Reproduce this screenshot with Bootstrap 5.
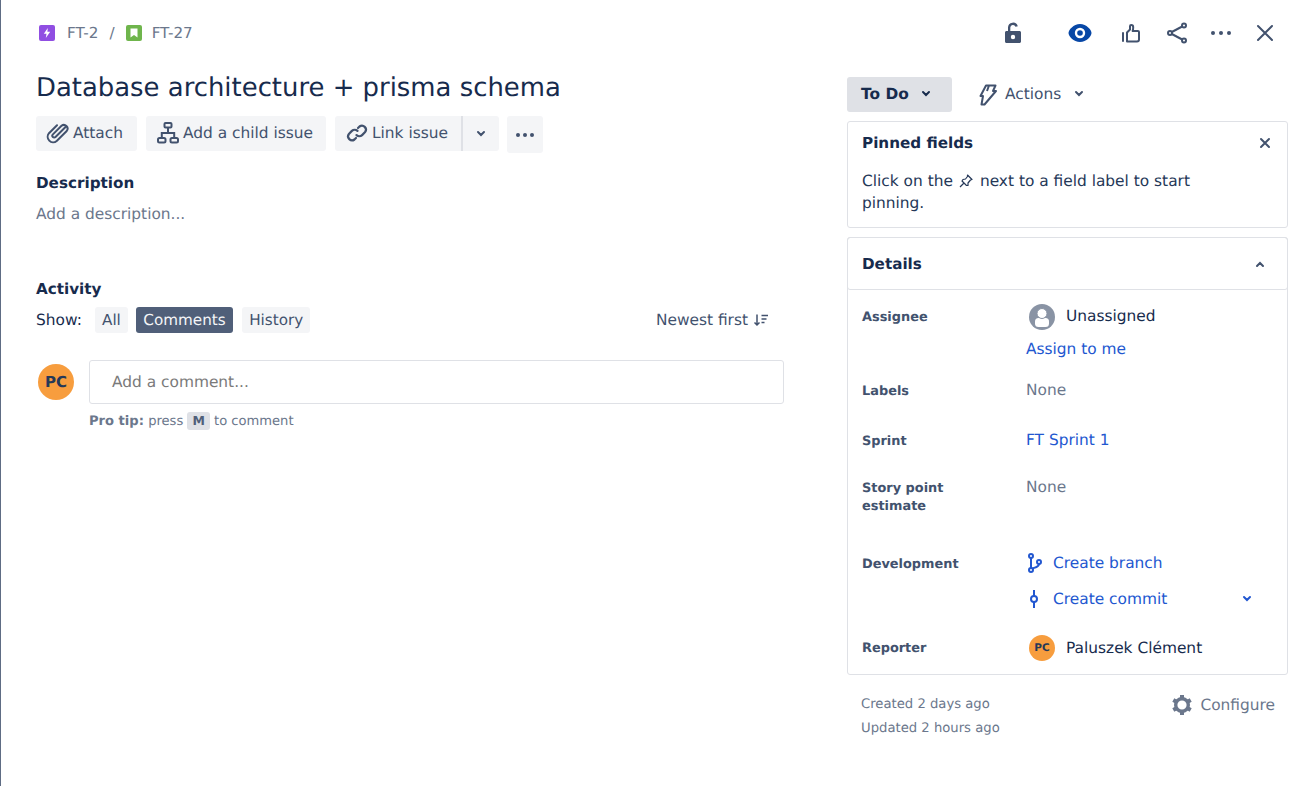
<!DOCTYPE html>
<html lang="en"><head><meta charset="utf-8"><title>FT-27</title>
<link href="https://cdn.jsdelivr.net/npm/bootstrap@5.3.0/dist/css/bootstrap.min.css" rel="stylesheet">
<style>
html,body{height:100%}
body{margin:0;background:#fff;font-family:"DejaVu Sans",sans-serif;font-size:15.4px;line-height:20px;color:#172b4d;overflow:hidden;text-rendering:geometricPrecision}
.shell{height:786px;border-left:1px solid #5e6c84;padding:0 15px 0 35px}
svg{display:block;flex:none}
.topbar{height:77px;padding:0 11px 0 0}
.crumbs{height:24px;margin-top:21px;color:#6b778c;padding-left:3px;font-size:15.2px}
.crumbs .sep{margin:0 11px 0 11px}
.crumbs .id1{margin-left:12px}
.crumbs .id2{margin-left:10px}
.sq{width:16px;height:16px;border-radius:2px}
.sq-p{background:#904ee2}.sq-g{background:#6fb54c}
.tools{margin-top:21px;height:24px;color:#42526e}
.tools .t1{margin-right:43px}
.tools .t2{margin-right:27px}
.tools .t3{margin-right:22px}
.tools .t4{margin-right:20px}
.tools .t5{margin-right:20px}
.leftcol{width:748px;flex:none}
.rightcol{width:441px;flex:none;margin-left:63px}
.title{font-size:25.9px;line-height:28px;font-weight:400;margin:-3px 0 0;color:#172b4d}
.btnrow{margin-top:14px;gap:9px;align-items:flex-start}
.gbtn{height:35px;background:#f4f5f7;border-radius:3px;color:#42526e;padding:0 13px 2px 10px;gap:3px;border:0}
.gbtn.b-first{padding-right:14px}
.gbtn.b-link{padding-right:13px;border-radius:3px 0 0 3px}
.gbtn.b-arrow{width:38px;padding:0;border-left:2px solid #dfe1e6;border-radius:0 3px 3px 0;justify-content:center}
.gbtn.b-more{width:36px;height:37px;padding:0;justify-content:center;margin-left:-1px}
.linkgroup{gap:0}
.hd{font-weight:700;font-size:15.2px;line-height:20px;color:#172b4d;margin:0}
.desc-h{margin-top:20px}
.ph{color:#6b778c;margin-top:11px}
.act-h{margin-top:55px}
.showrow{margin-top:8px;height:26px}
.showrow .lbl{width:59px}
.chip{height:26px;border-radius:3px;background:#f4f5f7;color:#42526e;padding:0 7px;margin-right:9px;font-size:15.2px}
.chip.c-all{margin-right:8px}
.chip.on{background:#505f79;color:#f4f5f7;padding:0 7.500px}
.sortx{color:#42526e;margin-right:15px;gap:5px}
.commentrow{margin-top:27px;padding-left:2px}
.av{border-radius:50%;background:#f79d3e;color:#253858;font-weight:700}
.av-l{width:36px;height:36px;font-size:15px;margin-top:4px}
.av-s{width:26px;height:26px;font-size:10.5px}
.cwrap{margin-left:15px;flex:1}
.cbox{height:44px;border:1px solid #dfe1e6;border-radius:3px;color:#7a7a7a;padding-left:22px}
.tip{font-size:13.1px;line-height:16px;color:#6b778c;margin-top:8px}
.keycap{display:inline-block;background:#dfe1e6;border-radius:3px;padding:1px 5px;font-weight:700;color:#505f79;margin:0;font-size:12.5px}
.status{width:105px;height:35px;background:#dfe1e6;border-radius:3px;font-weight:700;color:#172b4d;padding:0 0 2px 14px}
.status span{width:60px}
.actionsx{margin-left:26px;color:#42526e;padding-bottom:2px}
.actionsx svg:first-child{margin-top:2px}
.actionsx .lab{margin:0 13px 0 8px}
.panel{border:1px solid #dfe1e6;border-radius:3px;background:#fff}
.pinned{height:107px;margin-top:9px;padding:11px 16px 0 14px}
.pinned .txt{margin-top:17px;line-height:22px;color:#253858}
.pin{margin:0 6px 0 5px}
.details-card{margin-top:9px;height:438px;border:1px solid #dfe1e6;border-radius:3px}
.details-h{height:53px;border-radius:3px;padding:0 22px 0 14px;margin:-1px -1px 0;border:1px solid #dfe1e6}
.frow{display:flex;padding-left:14px}
.flab{width:164px;flex:none;font-size:12.9px;line-height:18px;font-weight:700;color:#42526e}
.none{color:#6b778c}
.blue{color:#2257d0}
.uname{margin-left:11px;padding-bottom:2px}
.fr6 .uname{padding-bottom:0}
.ava-line{padding-left:3px}
.assign{margin-top:9px}
.fr1{margin-top:14px}.fr1 .flab{padding-top:5px}
.fr2{margin-top:21px}.fr2 .flab{padding-top:3px}
.fr3{margin-top:29px}.fr3 .flab{padding-top:3px}
.fr4{margin-top:26px}.fr4 .flab{padding-top:3px}
.fr5{margin-top:35px}.fr5 .flab{padding-top:5px}
.fr6{margin-top:24px}.fr6 .flab{padding-top:5px}
.devline{height:24px;width:226px}
.devline+.devline{margin-top:12px}
.devline .n{margin-left:9px;padding-bottom:1px}
.foot{margin-top:16px;padding:0 13px 0 14px;font-size:13.2px;line-height:24px;color:#6b778c}
.stamps{padding-top:2px}
.cfg{font-size:15.4px;color:#6b778c;gap:6px;height:28px}
</style></head><body>
<div class="shell">
 <div class="topbar d-flex justify-content-between align-items-start">
  <div class="crumbs d-flex align-items-center">
   <div class="sq sq-p d-flex align-items-center justify-content-center"><svg width="10" height="12" viewBox="0 0 10 12"><path fill="#fff" d="M5.800 1 1.800 6.800h2.700L3.800 11l4.400-6.200H5.400z"/></svg></div>
   <span class="id1">FT-2</span><span class="sep">/</span>
   <div class="sq sq-g d-flex align-items-center justify-content-center"><svg width="10" height="12" viewBox="0 0 10 12"><path fill="#fff" d="M1.500 1.500h7v9L5 8 1.500 10.500z"/></svg></div>
   <span class="id2">FT-27</span>
  </div>
  <div class="tools d-flex align-items-center">
   <svg class="t1" width="24" height="24" viewBox="0 0 24 24"><path fill="#42526e" fill-rule="evenodd" d="M4 12.500C4 11.600 4.700 11 5.500 11H7V7.500a5 5 0 0 1 9.800-1.300l-2.300.6A2.700 2.700 0 0 0 9.300 7.500V11h9.200c.8 0 1.500.6 1.500 1.500v9c0 .8-.7 1.500-1.500 1.500h-13C4.700 23 4 22.300 4 21.500zm8 6.700a2.200 2.200 0 1 0 0-4.400 2.200 2.200 0 0 0 0 4.400z" transform="translate(0 -1)"/></svg>
   <svg class="t2" width="24" height="24" viewBox="0 0 24 24"><path fill="#0747a6" d="M12 3c6.500 0 11.500 6 11.500 9s-5 9-11.500 9S.5 15 .5 12 5.500 3 12 3z"/><circle cx="12" cy="12" r="5.200" fill="#fff"/><circle cx="12" cy="12" r="2.800" fill="#0747a6"/></svg>
   <svg class="t3" width="24" height="24" viewBox="0 0 24 24" fill="none" stroke="#42526e" stroke-width="2" stroke-linejoin="round"><path d="M4 12v8" stroke-linecap="round"/><path d="M8 20.500V11.500l3-3V5.300c0-.7.500-1.300 1.200-1.300 1.300 0 2 1 2 2.300 0 1.400-.3 3-.6 3.700h5.300c.6 0 1.100.5 1.100 1.100V18.500c0 1.200-.8 2-2 2z"/></svg>
   <svg class="t4" width="24" height="24" viewBox="0 0 24 24" fill="none" stroke="#42526e" stroke-width="2"><circle cx="19" cy="4.500" r="2"/><circle cx="19" cy="19.500" r="2"/><circle cx="5" cy="12" r="2"/><path d="M6.800 11 17.200 5.500M6.800 13 17.200 18.500"/></svg>
   <svg class="t5" width="24" height="24" viewBox="0 0 24 24" fill="#42526e"><circle cx="4" cy="12" r="2"/><circle cx="12" cy="12" r="2"/><circle cx="20" cy="12" r="2"/></svg>
   <svg width="24" height="24" viewBox="0 0 24 24" fill="none" stroke="#42526e" stroke-width="2" stroke-linecap="round"><path d="m5 5 14 14M19 5 5 19"/></svg>
  </div>
 </div>
 <div class="d-flex">
  <div class="leftcol">
   <h1 class="title">Database architecture + prisma schema</h1>
   <div class="btnrow d-flex">
    <div class="gbtn b-first d-flex align-items-center"><svg width="24" height="24" viewBox="0 0 24 24" fill="none" stroke="#42526e" stroke-width="2" stroke-linecap="round"><path d="M19.500 6 9.500 16a1.800 1.800 0 0 1-2.600-2.600L15.500 4.800a3.700 3.700 0 0 1 5.200 5.200L10.700 20A5.500 5.500 0 0 1 3 12.200L11 4.200"/></svg>Attach</div>
    <div class="gbtn d-flex align-items-center"><svg width="24" height="24" viewBox="0 0 24 24" fill="none" stroke="#42526e" stroke-width="2"><rect x="8.500" y="2" width="7" height="4.500" rx="1"/><rect x="2" y="17" width="7.500" height="4.500" rx="1.500"/><rect x="14.500" y="17" width="7.500" height="4.500" rx="1.500"/><path d="M12 6.500V12M5.800 17v-5h12.400v5"/></svg>Add a child issue</div>
    <div class="linkgroup d-flex">
     <div class="gbtn b-link d-flex align-items-center"><svg width="24" height="24" viewBox="0 0 24 24" fill="none" stroke="#42526e" stroke-width="2.200" stroke-linecap="round"><path d="m13 7 1.500-1.500a4 4 0 0 1 5.600 5.600l-3 3a4 4 0 0 1-5.600 0"/><path d="m11 17-1.500 1.500a4 4 0 0 1-5.600-5.600l3-3a4 4 0 0 1 5.600 0"/></svg>Link issue</div>
     <div class="gbtn b-arrow d-flex align-items-center"><svg width="10" height="8" viewBox="0 0 10 8" fill="none" stroke="#42526e" stroke-width="2" stroke-linecap="round"><path d="m2 2 3 3 3-3"/></svg></div>
    </div>
    <div class="gbtn b-more d-flex align-items-center"><svg width="20" height="6" viewBox="0 0 20 6" fill="#42526e"><circle cx="3" cy="3" r="2"/><circle cx="10" cy="3" r="2"/><circle cx="17" cy="3" r="2"/></svg></div>
   </div>
   <h2 class="hd desc-h">Description</h2>
   <div class="ph">Add a description...</div>
   <h2 class="hd act-h">Activity</h2>
   <div class="showrow d-flex align-items-center">
    <span class="lbl">Show:</span>
    <span class="chip c-all d-flex align-items-center">All</span>
    <span class="chip on d-flex align-items-center">Comments</span>
    <span class="chip d-flex align-items-center">History</span>
    <span class="sortx ms-auto d-flex align-items-center">Newest first<svg width="16" height="16" viewBox="0 0 16 16" fill="none" stroke="#42526e" stroke-width="1.500"><path d="M4 2.500v10M1.500 10.500 4 13l2.500-2.500M8.500 3.500h6.500M8.500 7h5M8.500 10.500h3"/></svg></span>
   </div>
   <div class="commentrow d-flex align-items-start">
    <div class="av av-l d-flex align-items-center justify-content-center">PC</div>
    <div class="cwrap">
     <div class="cbox d-flex align-items-center">Add a comment...</div>
     <div class="tip"><b>Pro tip:</b> press <span class="keycap">M</span> to comment</div>
    </div>
   </div>
  </div>
  <div class="rightcol">
   <div class="d-flex align-items-center">
    <div class="status d-flex align-items-center"><span>To Do</span><svg width="10" height="8" viewBox="0 0 10 8" fill="none" stroke="#172b4d" stroke-width="2" stroke-linecap="round"><path d="m2 2 3 3 3-3"/></svg></div>
    <div class="actionsx d-flex align-items-center"><svg width="19" height="22" viewBox="0 0 19 22" fill="none" stroke="#42526e" stroke-width="2" stroke-linejoin="round"><path d="M8 1.500h9.500L15 7h3L6.500 20.500h-3L5 12H2.500zM11 1.500 9 7"/></svg><span class="lab">Actions</span><svg width="10" height="8" viewBox="0 0 10 8" fill="none" stroke="#42526e" stroke-width="2" stroke-linecap="round"><path d="m2 2 3 3 3-3"/></svg></div>
   </div>
   <div class="panel pinned">
    <div class="d-flex justify-content-between align-items-center"><h3 class="hd">Pinned fields</h3><svg width="12" height="12" viewBox="0 0 12 12" fill="none" stroke="#42526e" stroke-width="2" stroke-linecap="round"><path d="m2 2 8 8M10 2l-8 8"/></svg></div>
    <div class="txt">
     <div class="d-flex align-items-center"><span>Click on the</span><svg class="pin" width="16" height="16" viewBox="0 0 16 16" fill="none" stroke="#253858" stroke-width="1.200" stroke-linejoin="round"><path d="m9.500 2 4.500 4.500-1.500.5-2.500 3 0 2.500L8.500 12.500 4 8l1-1.500L7.500 6l2-2.500zM6 10l-4 4"/></svg><span>next to a field label to start</span></div>
     <div>pinning.</div>
    </div>
   </div>
   <div class="details-card">
    <div class="details-h d-flex justify-content-between align-items-center"><h3 class="hd">Details</h3><svg width="10" height="8" viewBox="0 0 10 8" fill="none" stroke="#42526e" stroke-width="2" stroke-linecap="round"><path d="m2 6 3-3 3 3"/></svg></div>
    <div class="frow fr1"><div class="flab">Assignee</div><div>
      <div class="ava-line d-flex align-items-center"><svg width="26" height="26" viewBox="0 0 26 26"><circle cx="13" cy="13" r="13" fill="#8993a4"/><rect x="6" y="14" width="14" height="9" rx="3.500" fill="#fff"/><circle cx="13" cy="9.500" r="5" fill="#fff" stroke="#8993a4"/></svg><span class="uname">Unassigned</span></div>
      <div class="blue assign">Assign to me</div></div></div>
    <div class="frow fr2"><div class="flab">Labels</div><div class="none">None</div></div>
    <div class="frow fr3"><div class="flab">Sprint</div><div class="blue">FT Sprint 1</div></div>
    <div class="frow fr4"><div class="flab">Story point<br>estimate</div><div class="none">None</div></div>
    <div class="frow fr5"><div class="flab">Development</div><div>
      <div class="devline d-flex align-items-center blue"><svg width="18" height="22" viewBox="0 0 18 22" fill="none" stroke="#2257d0" stroke-width="2"><circle cx="5" cy="4" r="2"/><circle cx="5" cy="18" r="2"/><circle cx="13" cy="10" r="2"/><path d="M5 6v10M13 12c0 3-4 3.500-6.500 4.500"/></svg><span class="n">Create branch</span></div>
      <div class="devline d-flex align-items-center blue"><svg width="18" height="22" viewBox="0 0 18 22" fill="none" stroke="#2257d0" stroke-width="2"><circle cx="8" cy="11" r="3"/><path d="M8 2v6M8 14v6"/></svg><span class="n">Create commit</span><svg class="ms-auto" width="10" height="8" viewBox="0 0 10 8" fill="none" stroke="#2257d0" stroke-width="2" stroke-linecap="round"><path d="m2 2 3 3 3-3"/></svg></div></div></div>
    <div class="frow fr6"><div class="flab">Reporter</div><div class="ava-line d-flex align-items-center"><div class="av av-s d-flex align-items-center justify-content-center">PC</div><span class="uname">Paluszek Clément</span></div></div>
   </div>
   <div class="foot d-flex justify-content-between align-items-start">
    <div class="stamps">Created 2 days ago<br>Updated 2 hours ago</div>
    <div class="cfg d-flex align-items-center"><svg width="24" height="24" viewBox="0 0 24 24" fill="none" stroke="#6b778c" stroke-width="3.400"><circle cx="12" cy="12" r="6.300"/><path stroke-width="4" d="M12 2v3M12 19v3M3.300 7l2.600 1.500M18.100 15.500l2.600 1.500M3.300 17l2.600-1.500M18.100 8.500 20.700 7"/></svg>Configure</div>
   </div>
  </div>
 </div>
</div>
<script src="https://cdn.jsdelivr.net/npm/bootstrap@5.3.0/dist/js/bootstrap.bundle.min.js"></script>
</body></html>
